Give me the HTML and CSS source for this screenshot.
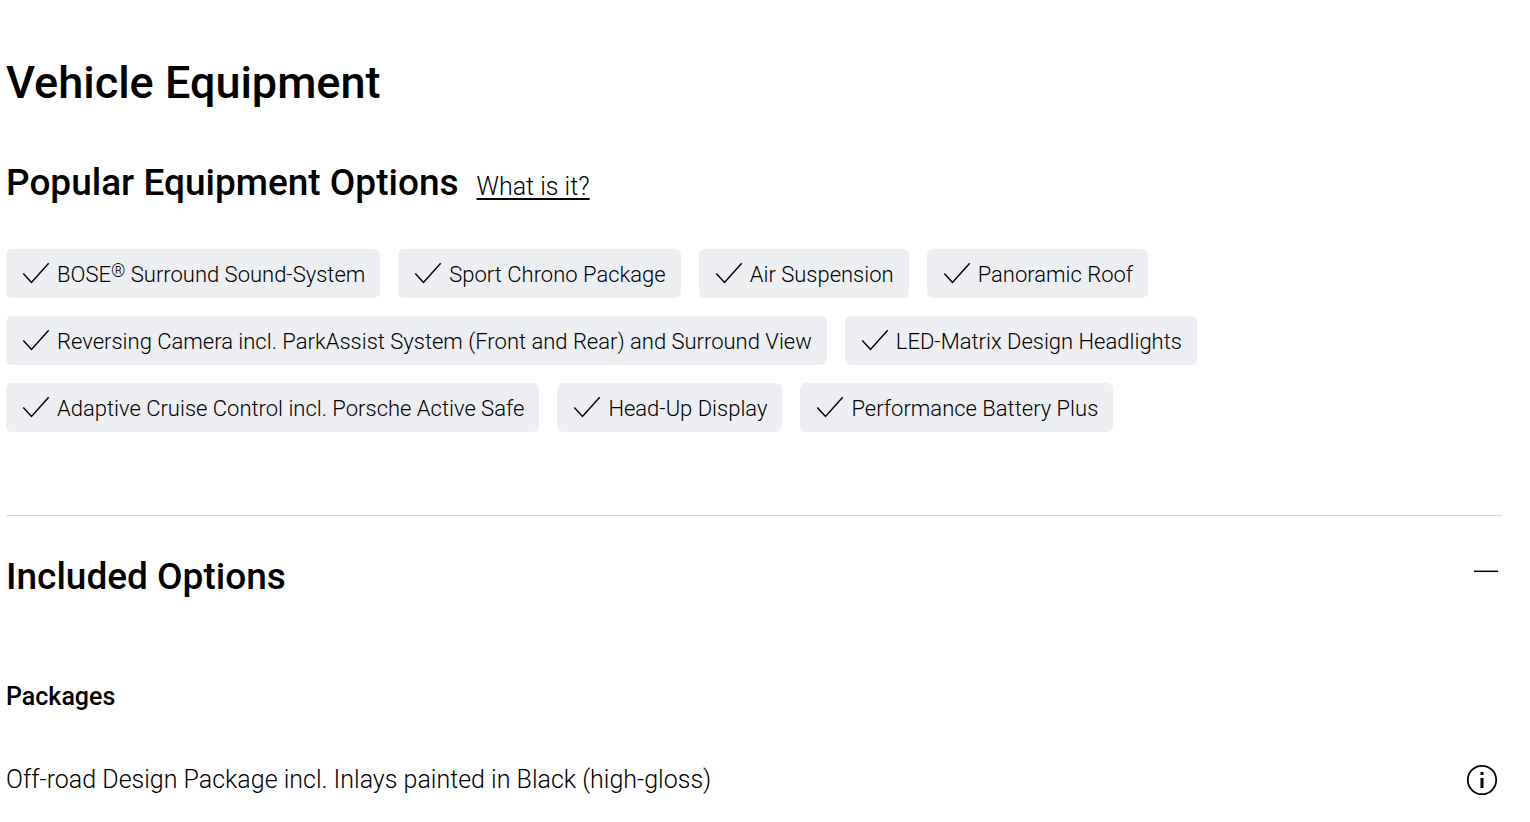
FILE: index.html
```html
<!DOCTYPE html>
<html lang="en">
<head>
<meta charset="utf-8">
<title>Vehicle Equipment</title>
<link rel="stylesheet" href="styles.css">
</head>
<body>
<svg class="defs" aria-hidden="true"><symbol id="check" viewBox="0 0 30 24"><path d="M2.300 11.500 10.500 20.500 27.700 1.200" fill="none" stroke="#010205" stroke-width="1.5"/></symbol></svg>
<main class="page">
  <h1 class="title">Vehicle Equipment</h1>
  <div class="popular">
    <h2 class="heading">Popular Equipment Options</h2>
    <a class="help" href="#">What is it?</a>
  </div>
  <ul class="tags">
    <li class="tag"><svg class="check"><use href="#check"/></svg><span>BOSE<sup class="mark">®</sup> Surround Sound-System</span></li>
    <li class="tag"><svg class="check"><use href="#check"/></svg><span>Sport Chrono Package</span></li>
    <li class="tag"><svg class="check"><use href="#check"/></svg><span>Air Suspension</span></li>
    <li class="tag"><svg class="check"><use href="#check"/></svg><span>Panoramic Roof</span></li>
    <li class="tag"><svg class="check"><use href="#check"/></svg><span>Reversing Camera incl. ParkAssist System (Front and Rear) and Surround View</span></li>
    <li class="tag"><svg class="check"><use href="#check"/></svg><span>LED-Matrix Design Headlights</span></li>
    <li class="tag"><svg class="check"><use href="#check"/></svg><span>Adaptive Cruise Control incl. Porsche Active Safe</span></li>
    <li class="tag"><svg class="check"><use href="#check"/></svg><span>Head-Up Display</span></li>
    <li class="tag"><svg class="check"><use href="#check"/></svg><span>Performance Battery Plus</span></li>
  </ul>
  <section class="included">
    <div class="row">
      <h2 class="heading">Included Options</h2>
      <button class="toggle" aria-label="Collapse Included Options"><svg width="24" height="24"><path d="M0 11.300H24" stroke="#010205" stroke-width="1.5"/></svg></button>
    </div>
    <h3 class="group">Packages</h3>
    <div class="row option">
      <span>Off-road Design Package incl. Inlays painted in Black (high-gloss)</span>
      <button class="info" aria-label="More information"><svg width="32" height="32" viewBox="0 0 32 32"><circle cx="16" cy="16" r="14.200" fill="none" stroke="#010205" stroke-width="1.8"/><path d="M16 14v10M16 8v3" stroke="#010205" stroke-width="3"/></svg></button>
    </div>
  </section>
</main>
</body>
</html>
```
FILE: styles.css
```css
* { box-sizing: border-box; }
body { margin: 0; background: #fff; color: #000; font-family: Roboto, "Liberation Sans", sans-serif; font-weight: 300; }
h1, h2, h3, ul { margin: 0; padding: 0; }
button { padding: 0; border: 0; background: none; display: flex; }
.defs { display: none; }
.page { padding: 50px 28px 0 6px; }
.title { font-size: 45px; line-height: 66px; font-weight: 500; }
.popular { display: flex; align-items: baseline; gap: 18px; margin-top: 40px; }
.heading { font-size: 37px; line-height: 54px; font-weight: 500; }
.help { color: inherit; font-size: 25px; text-underline-offset: 3px; text-decoration-thickness: 2px; }
.tags { display: flex; flex-wrap: wrap; gap: 18px; max-width: 1240px; margin-top: 39px; list-style: none; }
.tag { display: flex; align-items: center; gap: 6px; height: 49px; padding: 1px 15px 0; border-radius: 6px; background: #eeeff2; font-size: 22px; white-space: nowrap; }
.mark { font-size: 18px; line-height: 0; vertical-align: 5px; }
.check { width: 30px; height: 24px; flex: none; }
.included { margin-top: 83px; padding-top: 34px; border-top: 1px solid #d8d8db; }
.row { display: flex; align-items: center; justify-content: space-between; }
.toggle { align-self: flex-start; align-items: center; height: 44px; margin-right: 4px; }
.group { margin-top: 75px; font-size: 25px; line-height: 36px; font-weight: 500; }
.option { margin-top: 47px; font-size: 25px; line-height: 36px; }
.info { margin-right: 4px; }
```
